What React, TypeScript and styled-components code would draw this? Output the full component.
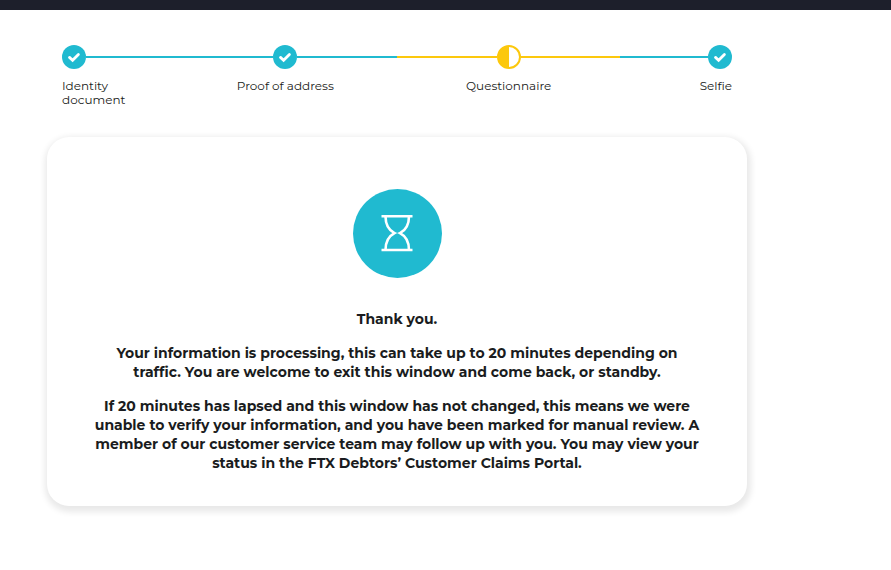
import React from "react";
import styled, { createGlobalStyle } from "styled-components";

const TEAL = "#20bad0";
const AMBER = "#fcc80d";
const INK = "#1a1c20";

const GlobalStyle = createGlobalStyle`
  *, *::before, *::after { box-sizing: border-box; }
  body {
    margin: 0;
    background: #fff;
    color: ${INK};
    font-family: Montserrat, Inter, "Open Sans", sans-serif;
  }
`;

const TopBar = styled.header`
  height: 10px;
  background: #1d1f2b;
`;

const Main = styled.main`
  max-width: 794px;
  padding: 35px 47px 56px;
`;

const Stepper = styled.ol`
  display: grid;
  grid-template-columns: minmax(0, 1fr) minmax(0, 2fr) minmax(0, 2fr) minmax(0, 1fr);
  margin: 0;
  padding: 0 15px;
  list-style: none;
`;

type Align = "left" | "center" | "right";

const StepItem = styled.li<{ $align: Align }>`
  display: flex;
  flex-direction: column;
  text-align: ${({ $align }) => $align};
`;

const Track = styled.div`
  display: flex;
  align-items: center;
`;

const Line = styled.span<{ $color: string }>`
  flex: 1;
  height: 2px;
  background: ${({ $color }) => $color};
`;

const Marker = styled.svg`
  display: block;
  flex: none;
  width: 24px;
  height: 24px;
`;

const StepLabel = styled.span`
  margin-top: 10px;
  font-size: 12px;
  line-height: 14px;
`;

const Card = styled.section`
  display: flex;
  flex-direction: column;
  align-items: center;
  margin-top: 30px;
  padding: 52px 44px 33px;
  border-radius: 22px;
  background: #fff;
  box-shadow: 1px 3px 6px 3px rgba(0, 0, 0, 0.09);
`;

const Hourglass = styled.svg`
  display: block;
  width: 89px;
  height: 89px;
  margin-bottom: 32px;
`;

const Message = styled.p`
  margin: 0 0 15px;
  font-size: 14px;
  font-weight: 700;
  line-height: 19px;
  text-align: center;

  &:last-child {
    margin-bottom: 0;
  }
`;

interface Step {
  label: string;
  done: boolean;
}

const steps: Step[] = [
  { label: "Identity document", done: true },
  { label: "Proof of address", done: true },
  { label: "Questionnaire", done: false },
  { label: "Selfie", done: true },
];

function StepMarker({ done }: { done: boolean }) {
  return done ? (
    <Marker viewBox="0 0 24 24" role="img" aria-label="Complete">
      <circle cx="12" cy="12" r="12" fill={TEAL} />
      <path
        d="M7.5 12.4 10.6 15.2 16.4 9.4"
        fill="none"
        stroke="#fff"
        strokeWidth="2.8"
        strokeLinecap="round"
      />
    </Marker>
  ) : (
    <Marker viewBox="0 0 24 24" role="img" aria-label="In progress">
      <circle cx="12" cy="12" r="11" fill="#fff" stroke={AMBER} strokeWidth="2" />
      <path d="M12 1a11 11 0 0 0 0 22z" fill={AMBER} />
    </Marker>
  );
}

export default function App() {
  return (
    <>
      <GlobalStyle />
      <TopBar />
      <Main>
        <Stepper>
          {steps.map(({ label, done }, i) => {
            const first = i === 0;
            const last = i === steps.length - 1;
            const color = done ? TEAL : AMBER;
            return (
              <StepItem key={label} $align={first ? "left" : last ? "right" : "center"}>
                <Track>
                  {!first && <Line $color={color} />}
                  <StepMarker done={done} />
                  {!last && <Line $color={color} />}
                </Track>
                <StepLabel>{label}</StepLabel>
              </StepItem>
            );
          })}
        </Stepper>
        <Card>
          <Hourglass viewBox="0 0 89 89" aria-hidden="true">
            <circle cx="44.5" cy="44.5" r="44.5" fill={TEAL} />
            <g fill="none" stroke="#fff" strokeWidth="2.6">
              <path d="M28.5 27.2h31M28.5 61h31" />
              <path d="M32.5 27.2C32.5 36 35.5 41 41.5 44.1 35.5 47.2 32.5 52.2 32.5 61M56 27.2C56 36 53 41 47 44.1 53 47.2 56 52.2 56 61" />
            </g>
          </Hourglass>
          <Message>Thank you.</Message>
          <Message>
            Your information is processing, this can take up to 20 minutes depending on traffic. You
            are welcome to exit this window and come back, or standby.
          </Message>
          <Message>
            If 20 minutes has lapsed and this window has not changed, this means we were unable to
            verify your information, and you have been marked for manual review. A member of our
            customer service team may follow up with you. You may view your status in the FTX
            Debtors’ Customer Claims Portal.
          </Message>
        </Card>
      </Main>
    </>
  );
}
